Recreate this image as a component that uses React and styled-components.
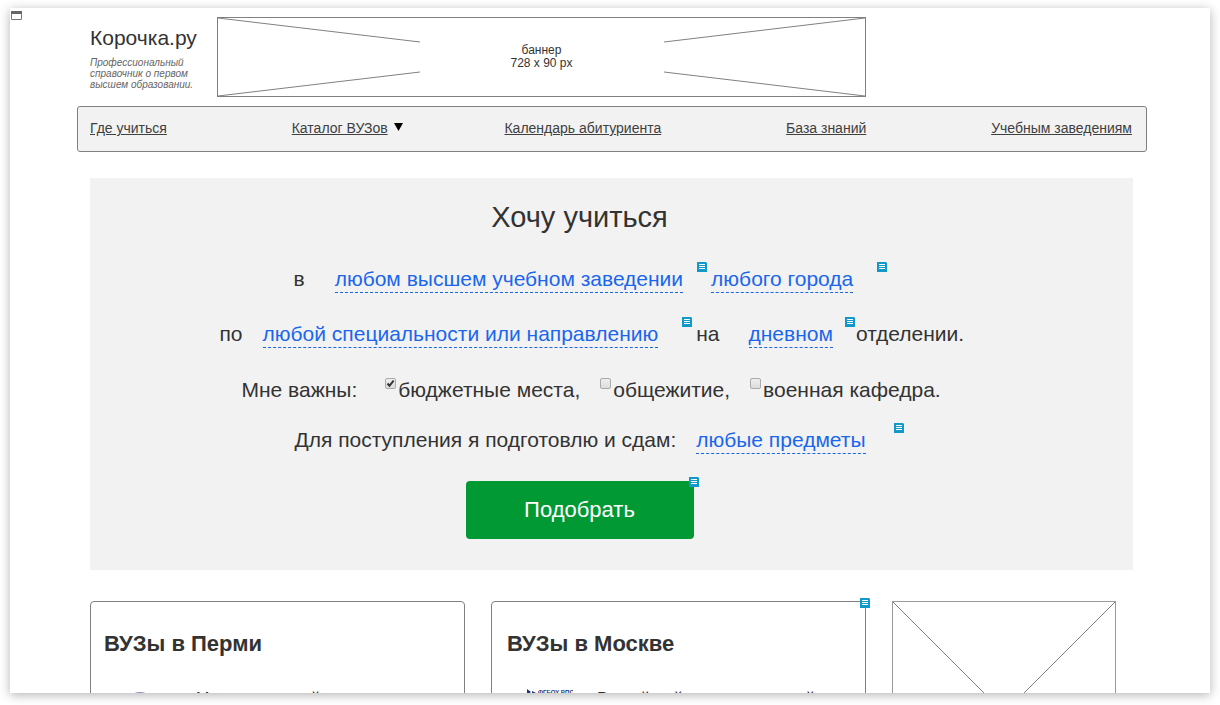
import styled, { createGlobalStyle } from "styled-components";

const GlobalStyle = createGlobalStyle`
    * {
        box-sizing: border-box;
    }
    body {
        margin: 0;
        background-color: #ffffff;
        color: #333333;
        font-family: "Liberation Sans", Arial, sans-serif;
    }
    h1, h2, p {
        margin: 0;
        padding: 0;
        font-weight: normal;
    }
`;

const Screen = styled("div")`
    height: 100vh;
    padding: 8px 10px 12px;
    overflow: hidden;
`;

const Sheet = styled("div")`
    position: relative;
    height: 100%;
    padding: 9px 63px 0 67px;
    background-color: #ffffff;
    box-shadow: 0 2px 10px rgba(0, 0, 0, 0.3);
    overflow: hidden;
`;

const CornerMark = styled("svg")`
    position: absolute;
    left: 1px;
    top: 3px;
`;

const Header = styled("header")`
    display: flex;
    gap: 18px;
    padding-left: 13px;
`;

const Brand = styled("div")`
    padding-top: 8px;
    width: 109px;
`;

const BrandLink = styled("a")`
    display: block;
    font-size: 21px;
    line-height: 26px;
    color: #333333;
    text-decoration: none;
    white-space: nowrap;
`;

const Tagline = styled("p")`
    margin-top: 6px;
    font-size: 10px;
    line-height: 11px;
    font-style: italic;
    color: #666666;
`;

const Banner = styled("div")`
    position: relative;
    display: flex;
    align-items: center;
    justify-content: center;
    width: 649px;
    height: 80px;
    border: 1px solid #808080;
    font-size: 12px;
    line-height: 13px;
    text-align: center;
`;

const Cross = styled("svg")`
    position: absolute;
    left: 0;
    top: 0;
    width: 100%;
    height: 100%;
    fill: none;
    stroke: #808080;
`;

const BannerText = styled("p")`
    position: relative;
`;

const Nav = styled("nav")`
    display: flex;
    justify-content: space-between;
    height: 46px;
    margin-top: 9px;
    padding: 13px 14px 0 12px;
    background-color: #f2f2f2;
    border: 1px solid #808080;
    border-radius: 3px;
    font-size: 14px;
    line-height: 16px;
`;

const NavItem = styled("div")`
    display: flex;
    gap: 6px;
    margin-right: ${(props) => (props.$menu ? "-23px" : "0")};
`;

const NavLink = styled("a")`
    color: #404040;
`;

const Arrow = styled("svg")`
    margin-top: 3px;
`;

const Main = styled("main")`
    padding: 0 14px 0 13px;
`;

const Search = styled("form")`
    display: flex;
    flex-direction: column;
    align-items: center;
    margin-top: 26px;
    padding: 21px 36px 31px 0;
    background-color: #f2f2f2;
`;

const SearchTitle = styled("h1")`
    padding-right: 28px;
    font-size: 29px;
    line-height: 36px;
`;

const Rows = styled("div")`
    width: 748px;
    margin-top: 27px;
    font-size: 21px;
    line-height: 34px;
    white-space: nowrap;
`;

const Row = styled("div")`
    display: flex;
    align-items: flex-start;
    height: 34px;
    margin-bottom: ${(props) => props.$space || 0}px;
    padding-left: ${(props) => props.$indent || 0}px;
`;

const Word = styled("span")`
    margin-right: ${(props) => props.$space || 0}px;
`;

const Choice = styled("a")`
    height: 31px;
    margin-right: ${(props) => props.$space || 0}px;
    border-bottom: 1px dashed #1a66e8;
    color: #1a66ee;
    text-decoration: none;
`;

const NoteIcon = styled("svg")`
    flex: none;
    margin-right: ${(props) => props.$space || 0}px;
`;

const CheckLabel = styled("label")`
    display: flex;
    align-items: flex-start;
    gap: 2px;
    margin-right: 20px;
`;

const Check = styled("input")`
    appearance: none;
    width: 11px;
    height: 11px;
    margin: 5px 0 0;
    border: 1px solid #aaaaaa;
    border-radius: 2px;
    background: linear-gradient(#eeeeee, #dddddd);

    &:checked {
        background: url("data:image/svg+xml,%3Csvg xmlns='http://www.w3.org/2000/svg' viewBox='0 0 9 9'%3E%3Cpath d='M1.5 4.5l2 2.3L7.6 1.6' fill='none' stroke='%23333' stroke-width='2'/%3E%3C/svg%3E"),
            linear-gradient(#eeeeee, #dddddd);
    }
`;

const SubmitWrap = styled("div")`
    position: relative;
    margin: 24px 28px 0 0;
`;

const Submit = styled("button")`
    display: block;
    width: 228px;
    height: 58px;
    border: none;
    border-radius: 4px;
    background-color: #009933;
    color: #ffffff;
    font-family: inherit;
    font-size: 22px;
    cursor: pointer;
`;

const CornerNote = styled("div")`
    position: absolute;
    right: -5px;
    top: -4px;
    display: flex;
`;

const Cards = styled("div")`
    display: grid;
    grid-template-columns: 375fr 375fr 224fr;
    gap: 26px;
    margin-top: 31px;
    padding-right: 17px;
`;

const Card = styled("section")`
    position: relative;
    height: 320px;
    padding: 29px 13px;
    border: 1px solid #808080;
    border-radius: 4px;
`;

const CardTitle = styled("h2")`
    padding-left: ${(props) => props.$indent || 0}px;
    font-size: 22px;
    font-weight: bold;
    line-height: 26px;
`;

const School = styled("div")`
    display: flex;
    align-items: flex-start;
    margin-top: 30px;
    padding-left: 20px;
    font-size: 16px;
    line-height: 20px;
`;

const SchoolLogo = styled("svg")`
    flex: none;
    margin-right: 24px;
    font-size: 6px;
    font-weight: bold;
`;

const SchoolName = styled("p")`
    padding-top: 2px;
`;

const Picture = styled("div")`
    position: relative;
    height: 224px;
    border: 1px solid #999999;
`;

function Note({ space }) {
    return (
        <NoteIcon $space={space} width="10" height="10" viewBox="0 0 10 10" aria-hidden="true">
            <path d="M0 0h9l1 1v9H0z" fill="#1199cc" />
            <path d="M2 2.500h6M2 4.500h6M2 6.500h6" stroke="#ffffff" />
        </NoteIcon>
    );
}

function CheckOption({ label, defaultChecked }) {
    return (
        <CheckLabel>
            <Check type="checkbox" defaultChecked={defaultChecked} />
            {label}
        </CheckLabel>
    );
}

function TopNav() {
    return (
        <Nav>
            <NavItem>
                <NavLink href="#where">Где учиться</NavLink>
            </NavItem>
            <NavItem $menu>
                <NavLink href="#catalog">Каталог ВУЗов</NavLink>
                <Arrow width="9" height="8" viewBox="0 0 9 8" aria-hidden="true">
                    <path d="M0 0h9L4.500 8z" fill="#000000" />
                </Arrow>
            </NavItem>
            <NavItem>
                <NavLink href="#calendar">Календарь абитуриента</NavLink>
            </NavItem>
            <NavItem>
                <NavLink href="#knowledge">База знаний</NavLink>
            </NavItem>
            <NavItem>
                <NavLink href="#schools">Учебным заведениям</NavLink>
            </NavItem>
        </Nav>
    );
}

function SearchForm() {
    return (
        <Search onSubmit={(e) => e.preventDefault()}>
            <SearchTitle>Хочу учиться</SearchTitle>
            <Rows>
                <Row $indent={74} $space={21}>
                    <Word $space={30}>в</Word>
                    <Choice href="#school" $space={14}>любом высшем учебном заведении</Choice>
                    <Note space={4} />
                    <Choice href="#city" $space={24}>любого города</Choice>
                    <Note />
                </Row>
                <Row $space={22}>
                    <Word $space={20}>по</Word>
                    <Choice href="#speciality" $space={24}>любой специальности или направлению</Choice>
                    <Note space={4} />
                    <Word $space={29}>на</Word>
                    <Choice href="#form" $space={12}>дневном</Choice>
                    <Note space={1} />
                    <Word>отделении.</Word>
                </Row>
                <Row $indent={22} $space={16}>
                    <Word $space={28}>Мне важны:</Word>
                    <CheckOption label="бюджетные места," defaultChecked />
                    <CheckOption label="общежитие," />
                    <CheckOption label="военная кафедра." />
                </Row>
                <Row $indent={75}>
                    <Word $space={20}>Для поступления я подготовлю и сдам:</Word>
                    <Choice href="#subjects" $space={28}>любые предметы</Choice>
                    <Note />
                </Row>
            </Rows>
            <SubmitWrap>
                <Submit type="submit">Подобрать</Submit>
                <CornerNote>
                    <Note />
                </CornerNote>
            </SubmitWrap>
        </Search>
    );
}

function App() {
    return (
        <Screen>
            <GlobalStyle />
            <Sheet>
                <CornerMark width="11" height="9" viewBox="0 0 11 9" aria-hidden="true">
                    <path d="M.5.5h10v8H.5z" fill="#ffffff" stroke="#777777" />
                    <path d="M0 0h11v3H0z" fill="#666666" />
                </CornerMark>
                <Header>
                    <Brand>
                        <BrandLink href="#home">Корочка.ру</BrandLink>
                        <Tagline>Профессиональный справочник о первом высшем образовании.</Tagline>
                    </Brand>
                    <Banner>
                        <Cross viewBox="0 0 647 78" preserveAspectRatio="none" aria-hidden="true">
                            <path d="M0 0L202 24M647 0L446 24M0 78L202 54M647 78L446 54" />
                        </Cross>
                        <BannerText>
                            баннер
                            <br />
                            728 x 90 px
                        </BannerText>
                    </Banner>
                </Header>
                <TopNav />
                <Main>
                    <SearchForm />
                    <Cards>
                        <Card>
                            <CardTitle>ВУЗы в Перми</CardTitle>
                            <School>
                                <SchoolLogo width="48" height="48" viewBox="0 0 48 48" aria-hidden="true">
                                    <circle cx="16" cy="20" r="14" fill="#ffffff" stroke="#9988cc" strokeWidth="2" />
                                </SchoolLogo>
                                <SchoolName>Международный</SchoolName>
                            </School>
                        </Card>
                        <Card>
                            <CardTitle $indent={2}>ВУЗы в Москве</CardTitle>
                            <School>
                                <SchoolLogo width="48" height="48" viewBox="0 0 48 48" aria-hidden="true">
                                    <path d="M2 2v6l4-3zM7 4v5l4-3z" fill="#223377" />
                                    <text x="13" y="7" fill="#223377">
                                        ФГБОУ ВПО
                                    </text>
                                </SchoolLogo>
                                <SchoolName>Российский государственный</SchoolName>
                            </School>
                            <CornerNote>
                                <Note />
                            </CornerNote>
                        </Card>
                        <Picture>
                            <Cross viewBox="0 0 222 222" preserveAspectRatio="none" aria-hidden="true">
                                <path d="M0 0L222 222M222 0L0 222" />
                            </Cross>
                        </Picture>
                    </Cards>
                </Main>
            </Sheet>
        </Screen>
    );
}

export default App;
